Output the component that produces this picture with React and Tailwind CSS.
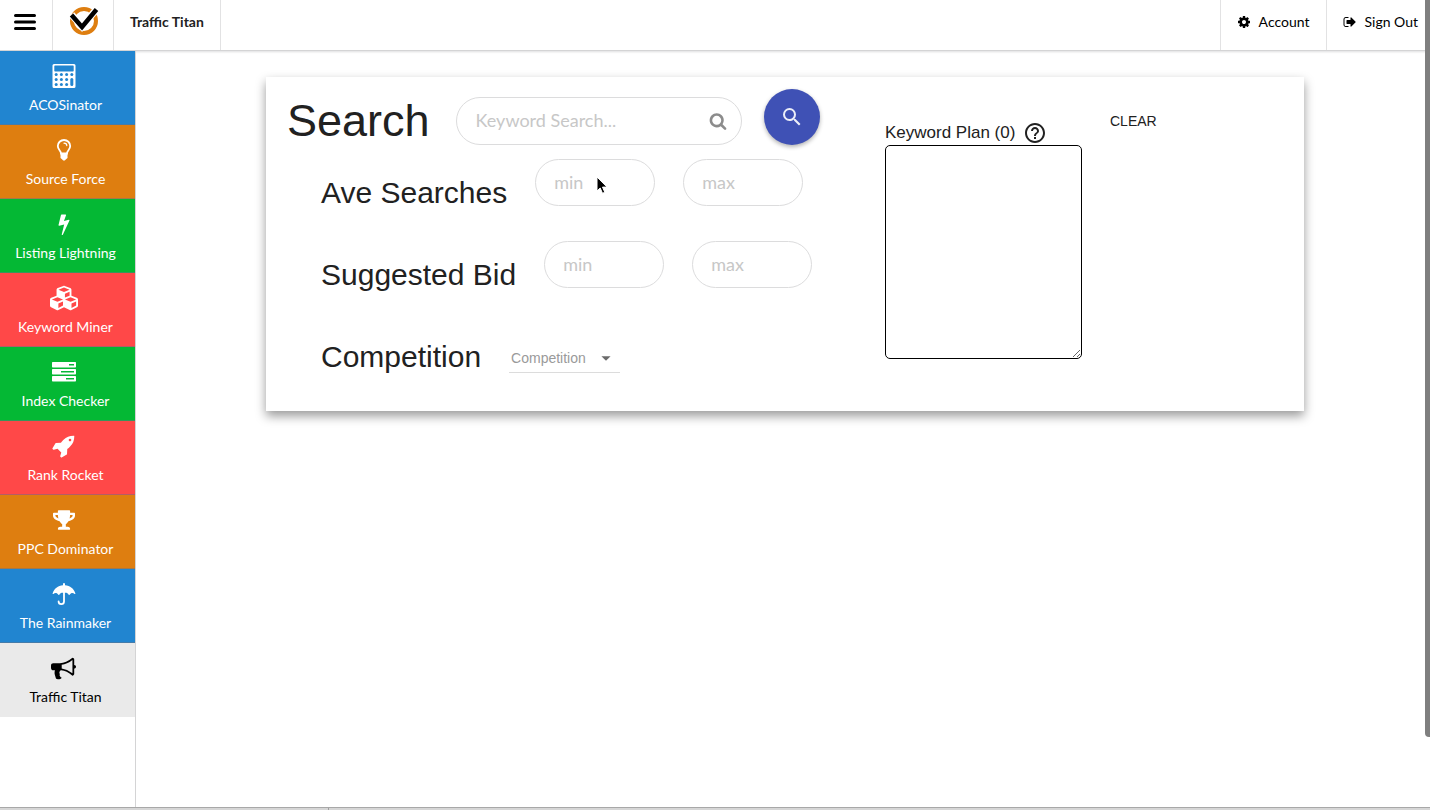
import React, { useState } from 'react';
import { FaCubes, FaTrophy } from 'react-icons/fa';
import { MdSearch, MdHelpOutline, MdArrowDropDown } from 'react-icons/md';

const Glyph = ({ d, size = 24, className = '' }) => (
    <svg width={size} height={size} viewBox="0 0 1792 1792" fill="currentColor" className={className} aria-hidden="true">
        <path d={d} />
    </svg>
);

const BOLT = 'M1333 566q18 20 7 44l-540 1157q-13 25-42 25-4 0-14-2-17-5-25.5-19t-4.5-30l197-808-406 101q-4 1-12 1-18 0-31-11-18-15-13-39l201-825q4-14 16-23t28-9h328q19 0 32 12.5t13 29.5q0 8-5 18l-171 463 396-98q8-2 12-2 19 0 34 15z';
const SEARCH = 'M1216 832q0-185-131.5-316.5t-316.5-131.5-316.5 131.5-131.5 316.5 131.5 316.5 316.5 131.5 316.5-131.5 131.5-316.5zm512 832q0 52-38 90t-90 38q-54 0-90-38l-343-342q-179 124-399 124-143 0-273.5-55.5t-225-150-150-225-55.5-273.5 55.5-273.5 150-225 225-150 273.5-55.5 273.5 55.5 225 150 150 225 55.5 273.5q0 220-124 399l343 343q37 37 37 90z';
const COG = 'M1152 896q0-106-75-181t-181-75-181 75-75 181 75 181 181 75 181-75 75-181zm512-109v222q0 12-8 23t-20 13l-185 28q-19 54-39 91 35 50 107 138 10 12 10 25t-9 23q-27 37-99 108t-94 71q-12 0-26-9l-138-108q-44 23-91 38-16 136-29 186-7 28-36 28h-222q-14 0-24.5-8.5t-11.5-21.5l-28-184q-49-16-90-37l-141 107q-10 9-25 9-14 0-25-11-126-114-165-168-7-10-7-23 0-12 8-23 15-21 51-66.5t54-70.5q-27-50-41-99l-183-27q-13-2-21-12.5t-8-23.5v-222q0-12 8-23t19-13l186-28q14-46 39-92-40-57-107-138-10-12-10-24 0-10 9-23 26-36 98.5-107.5t94.5-71.5q13 0 26 10l138 107q44-23 91-38 16-136 29-186 7-28 36-28h222q14 0 24.5 8.5t11.5 21.5l28 184q49 16 90 37l142-107q9-9 24-9 13 0 25 10 129 119 165 170 7 8 7 22 0 12-8 23-15 21-51 66.5t-54 70.5q26 50 41 98l183 28q13 2 21 12.5t8 23.5z';
const SIGN_OUT = 'M704 1440q0 4 1 20t.5 26.5-3 23.5-10 19.5-20.5 6.5h-320q-119 0-203.5-84.5t-84.5-203.5v-704q0-119 84.5-203.5t203.5-84.5h320q13 0 22.5 9.5t9.5 22.5q0 4 1 20t.5 26.5-3 23.5-10 19.5-20.5 6.5h-320q-66 0-113 47t-47 113v704q0 66 47 113t113 47h312l11.5 1 11.5 3 8 5.5 7 9 2 13.5zm928-544q0 26-19 45l-544 544q-19 19-45 19t-45-19-19-45v-288h-448q-26 0-45-19t-19-45v-384q0-26 19-45t45-19h448v-288q0-26 19-45t45-19 45 19l544 544q19 19 19 45z';
const ROCKET = 'M1440 448q0-40-28-68t-68-28-68 28-28 68 28 68 68 28 68-28 28-68zm224-288q0 249-75.5 430.5t-253.5 360.5q-81 80-195 176l-20 379q-2 16-16 26l-384 224q-7 4-16 4-12 0-23-9l-64-64q-13-14-8-32l85-276-281-281-276 85q-3 1-9 1-14 0-23-9l-64-64q-17-19-5-39l224-384q10-14 26-16l379-20q96-114 176-195 188-187 358-258t431-71q14 0 24 9.5t10 22.5z';
const BULLHORN = 'M1664 640q53 0 90.5 37.5t37.5 90.5-37.5 90.5-90.5 37.5v384q0 52-38 90t-90 38q-417-347-812-380-58 19-91 66t-31 100.5 40 92.5q-20 33-23 65.5t6 58 33.5 55 48 50 61.5 50.5q-29 58-111.5 83t-168.5 11.5-132-55.5q-7-23-29.5-87.5t-32-94.5-23-89-15-101 3.5-98.5 22-110.5h-122q-66 0-113-47t-47-113v-192q0-66 47-113t113-47h480q435 0 896-384 52 0 90 38t38 90v384zm-128 604v-954q-394 302-768 343v270q377 42 768 341z';

const CalculatorIcon = () => (
    <svg width="24" height="26" viewBox="0 0 24 26" aria-hidden="true">
        <path
            fill="currentColor"
            fillRule="evenodd"
            d="M2 1h20a1.5 1.5 0 0 1 1.5 1.5v21A1.5 1.5 0 0 1 22 25H2A1.5 1.5 0 0 1 .5 23.500v-21A1.5 1.5 0 0 1 2 1zM3 2.500a.7.7 0 0 0-.7.7v4.600c0 .4.3.7.7.7h18c.4 0 .7-.3.7-.7V3.200a.7.7 0 0 0-.7-.7z"
        />
        <g className="fill-[#2185d0]">
            {[11.5, 16.5, 21.5].map(cy => [4.2, 9.4, 14.6].map(cx => (
                <circle key={`${cx}-${cy}`} cx={cx} cy={cy} r="1.5" />
            )))}
            <circle cx="19.8" cy="11.5" r="1.5" />
            <rect x="18.3" y="15" width="3" height="8" rx="1.5" />
        </g>
    </svg>
);

const BulbIcon = () => (
    <svg width="16" height="22" viewBox="0 0 16 22" fill="none" stroke="currentColor" aria-hidden="true">
        <path d="M5 14.500C5 11.500 1.800 10.800 1.800 7a6.200 6 0 0 1 12.400 0c0 3.800-3.200 4.500-3.200 7.500z" strokeWidth="1.8" />
        <path d="M8 4.200c1.600 0 2.800 1 2.800 2.400" strokeWidth="1.2" strokeLinecap="round" />
        <path d="M4.500 14h7v5l-1.500 1.300L8.800 21.500H7.200L6 20.300 4.500 19z" fill="currentColor" stroke="none" />
    </svg>
);

const UmbrellaIcon = () => (
    <svg width="24" height="23" viewBox="0 0 24 23" fill="none" aria-hidden="true">
        <path
            fill="currentColor"
            d="M11 2.200V1a1 1 0 0 1 2 0v1.200c5 .4 9 3.300 10.400 8.200.1.500-.4.8-.8.500-1.600-1.400-3.600-1.300-5 .8-.3.4-.7.4-.9 0-1.200-2-2.700-2.300-4.700-1.800-2-.5-3.500-.2-4.700 1.800-.2.4-.6.4-.9 0-1.400-2.100-3.400-2.200-5-.8-.4.300-.9 0-.8-.5C2 5.500 6 2.600 11 2.200z"
        />
        <path d="M12 9v9.500a2.700 2.700 0 0 1-5.400 0" stroke="currentColor" strokeWidth="1.8" strokeLinecap="round" />
    </svg>
);

const TasksIcon = () => (
    <svg width="24" height="20" viewBox="0 0 24 20" fill="currentColor" fillRule="evenodd" aria-hidden="true">
        <path d="M.7 0h22.600a.7.7 0 0 1 .7.7v4.100a.7.7 0 0 1-.7.7H.7a.7.7 0 0 1-.7-.7V.7A.7.7 0 0 1 .7 0zM17 2v1.500h5V2z" />
        <path d="M.7 7h22.600a.7.7 0 0 1 .7.7v4.100a.7.7 0 0 1-.7.7H.7a.7.7 0 0 1-.7-.7V7.700A.7.7 0 0 1 .7 7zM9 9v1.500h13V9z" />
        <path d="M.7 14h22.600a.7.7 0 0 1 .7.7v4.100a.7.7 0 0 1-.7.7H.7a.7.7 0 0 1-.7-.7v-4.100a.7.7 0 0 1 .7-.7zM14 16v1.500h8V16z" />
    </svg>
);

const Logo = () => (
    <svg width="30" height="30" viewBox="0 0 30 30" fill="none" aria-hidden="true">
        <circle cx="15" cy="16" r="12" stroke="#de7e10" strokeWidth="4" />
        <path d="M2.500 9.500l10.500 12L28.500 3" stroke="#fff" strokeWidth="7" />
        <path d="M2.500 10l10.500 12L27.500 4.500" stroke="#000" strokeWidth="4.5" />
    </svg>
);

const tools = [
    { name: 'ACOSinator', color: 'bg-[#2185d0] text-white', icon: <CalculatorIcon /> },
    { name: 'Source Force', color: 'bg-[#de7e10] text-white', icon: <BulbIcon /> },
    { name: 'Listing Lightning', color: 'bg-[#04b834] text-white', icon: <Glyph d={BOLT} size={22} /> },
    { name: 'Keyword Miner', color: 'bg-[#ff4848] text-white', icon: <FaCubes size={28} /> },
    { name: 'Index Checker', color: 'bg-[#04b834] text-white', icon: <TasksIcon /> },
    { name: 'Rank Rocket', color: 'bg-[#ff4848] text-white', icon: <Glyph d={ROCKET} /> },
    { name: 'PPC Dominator', color: 'bg-[#de7e10] text-white', icon: <FaTrophy size={22} /> },
    { name: 'The Rainmaker', color: 'bg-[#2185d0] text-white', icon: <UmbrellaIcon /> },
    { name: 'Traffic Titan', color: 'bg-[#eaeaea] text-black', icon: <Glyph d={BULLHORN} size={25} /> },
];

const Header = () => (
    <header className="flex h-[51px] shrink-0 border-b border-[#d4d4d5] bg-white text-sm text-black shadow-[0_1px_2px_rgba(34,36,38,0.15)]">
        <button aria-label="Menu" className="flex w-[53px] items-center justify-center border-r border-[#e2e2e3] pr-0.5 pb-1.5">
            <svg width="22" height="16" viewBox="0 0 22 16" aria-hidden="true">
                <path d="M1.5 1.500h19M1.5 8h19M1.5 14.500h19" stroke="currentColor" strokeWidth="3" strokeLinecap="round" />
            </svg>
        </button>
        <a href="#home" aria-label="Home" className="flex w-[61px] items-center justify-center border-r border-[#e2e2e3] pb-2.5 pl-0.5">
            <Logo />
        </a>
        <div className="flex items-center border-r border-[#e2e2e3] px-4 pb-1.5 font-bold text-[#222]">Traffic Titan</div>
        <nav className="ml-auto flex">
            <a href="#account" className="flex items-center gap-2 border-l border-[#e2e2e3] px-4 pb-1.5">
                <Glyph d={COG} size={14} />
                Account
            </a>
            <a href="#signout" className="flex items-center gap-2 border-l border-[#e2e2e3] pr-3 pb-1.5 pl-4">
                <Glyph d={SIGN_OUT} size={14} />
                Sign Out
            </a>
        </nav>
    </header>
);

const Sidebar = () => (
    <nav className="w-[136px] shrink-0 border-r border-[#d4d4d5]">
        {tools.map(tool => (
            <a
                key={tool.name}
                href="#tool"
                className={`flex h-[74px] flex-col items-center border-b border-gray-500/50 pt-[11px] text-sm last:border-transparent ${tool.color}`}
            >
                <span className="mr-2 flex h-7 items-center">{tool.icon}</span>
                <span className="mr-1 pt-[5px]">{tool.name}</span>
            </a>
        ))}
    </nav>
);

const RangeRow = ({ label }) => (
    <div className="flex h-[82px] items-start pl-[34px]">
        <h2 className="mr-7 pt-3.5 text-3xl leading-10">{label}</h2>
        <div className="flex gap-7 font-[Lato,sans-serif]">
            {['min', 'max'].map(bound => (
                <input
                    key={bound}
                    type="text"
                    aria-label={`${label} ${bound}`}
                    placeholder={bound}
                    className="h-[47px] w-[120px] rounded-full border border-[#dcdcdd] px-[18px] pb-0.5 text-lg placeholder:text-[#c7c7c7] focus:outline-none"
                />
            ))}
        </div>
    </div>
);

const SearchCard = () => {
    const [keyword, setKeyword] = useState('');
    const [plan, setPlan] = useState('');

    return (
        <section className="grid min-h-[334px] grid-cols-[619fr_225fr_194fr] bg-white font-['Liberation_Sans',Arial,sans-serif] text-[#212121] shadow-[0_5px_10px_rgba(0,0,0,0.4)]">
            <div className="pt-3 pl-[21px]">
                <div className="mb-3.5 flex h-14">
                    <h1 className="mr-[26px] pt-1.5 text-[45px] leading-[52px]">Search</h1>
                    <div className="relative mt-2 mr-[22px] h-12 w-[286px]">
                        <input
                            type="text"
                            aria-label="Keyword Search"
                            placeholder="Keyword Search..."
                            value={keyword}
                            onChange={(e) => setKeyword(e.target.value)}
                            className="size-full rounded-full border border-[#dcdcdd] pr-12 pb-0.5 pl-[19px] font-[Lato,sans-serif] text-lg placeholder:text-[#c7c7c7] focus:outline-none"
                        />
                        <Glyph d={SEARCH} size={18} className="absolute top-[15px] right-[15px] text-[#8c8c8c]" />
                    </div>
                    <button
                        aria-label="Search"
                        className="flex size-14 items-center justify-center rounded-full bg-[#3f51b5] text-white/90 shadow-[0_2px_4px_rgba(0,0,0,0.3)]"
                    >
                        <MdSearch size={24} />
                    </button>
                </div>

                <RangeRow label="Ave Searches" />
                <RangeRow label="Suggested Bid" />

                <div className="flex items-start pl-[34px]">
                    <h2 className="mr-7 pt-3.5 text-3xl leading-10">Competition</h2>
                    <div className="relative mt-[21px]">
                        <select
                            aria-label="Competition"
                            className="h-[29px] w-[111px] appearance-none border-b border-[#dcdcdc] bg-transparent pl-0.5 text-sm text-[#9a9a9a] focus:outline-none"
                        >
                            <option>Competition</option>
                            <option>Low</option>
                            <option>Medium</option>
                            <option>High</option>
                        </select>
                        <MdArrowDropDown size={22} className="pointer-events-none absolute top-[3px] right-[3px] text-[#6b6b6b]" />
                    </div>
                </div>
            </div>

            <div className="pt-[43px]">
                <div className="flex h-[25px] items-center gap-2">
                    <label htmlFor="plan" className="text-[17px]">Keyword Plan (0)</label>
                    <MdHelpOutline size={24} />
                </div>
                <textarea
                    id="plan"
                    value={plan}
                    onChange={(e) => setPlan(e.target.value)}
                    className="block h-[214px] w-[197px] rounded-[5px] border border-black p-2 text-sm focus:outline-none"
                />
            </div>

            <div className="pt-8">
                <button onClick={() => setPlan('')} className="text-sm">CLEAR</button>
            </div>
        </section>
    );
};

export default function App() {
    return (
        <div className="relative flex min-h-screen flex-col bg-white font-[Lato,sans-serif]">
            <Header />
            <div className="flex flex-1">
                <Sidebar />
                <main className="flex-1 pt-[26px] pr-[126px] pl-[130px]">
                    <SearchCard />
                </main>
            </div>
            <footer className="flex h-[3px] border-t border-[#a8a8a8] bg-[#d6d6d6]">
                <div className="w-[329px] border-r border-[#a0a0a0]" />
            </footer>

            {/* Scroll thumb */}
            <div className="absolute top-0 right-0 h-[91%] w-[5px] rounded-bl bg-[#7f7f7f]" />

            {/* Mouse pointer */}
            <svg className="pointer-events-none absolute top-[176px] left-[595px]" width="14" height="20" viewBox="0 0 14 20" aria-hidden="true">
                <path d="M2 1v14l3.200-3 2.300 5.300 2.300-1-2.300-5.200H12z" fill="#000" stroke="#fff" strokeWidth="1" />
            </svg>
        </div>
    );
}
